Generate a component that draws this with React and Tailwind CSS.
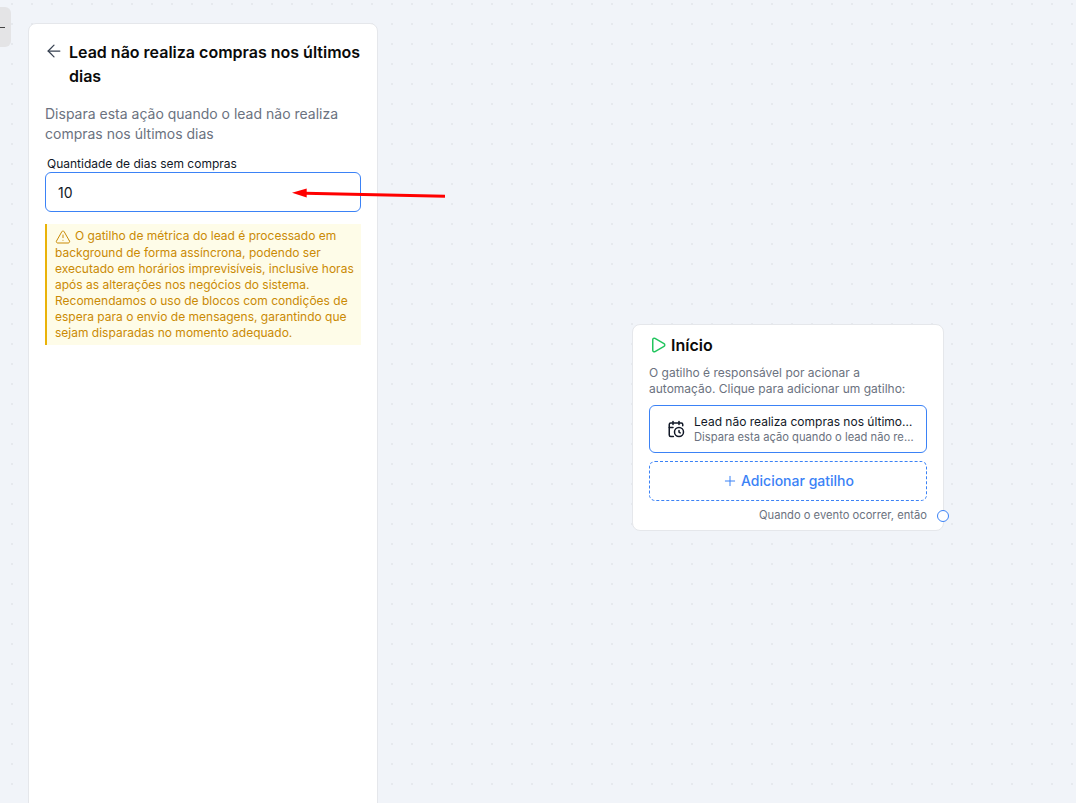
import React from "react";
import { ArrowLeft, CalendarClock, Play, Plus, TriangleAlert } from "lucide-react";

const App = () => {
  return (
    <div className="relative h-[803px] w-[1076px] overflow-hidden bg-[#f1f4f9] bg-[radial-gradient(circle,#e6e9ee_1px,transparent_1.5px)] bg-[length:20px_20px] bg-[position:2px_14px] font-['Inter',sans-serif]">
      {/* sidebar toggle */}
      <div className="absolute left-0 top-[7px] flex h-[40px] w-[11px] items-center rounded-r-md bg-[#e4e4e6]">
        <span className="h-px w-[5px] bg-[#444]"></span>
      </div>

      {/* left panel */}
      <div className="ml-[28px] mt-[23px] h-[820px] w-[350px] rounded-lg border border-[#e5e7eb] bg-white px-4 py-4">
        <div className="flex items-start gap-[5px]">
          <ArrowLeft size={20} strokeWidth={1.5} className="ml-[-1px] mt-[1px] shrink-0 text-[#374151]" />
          <h2 className="mr-[-4px] text-base font-semibold leading-6 text-[#0a0a0a]">
            Lead não realiza compras nos últimos dias
          </h2>
        </div>
        <p className="mt-[16px] text-sm leading-5 text-[#6b7280]">
          Dispara esta ação quando o lead não realiza compras nos últimos dias
        </p>
        <label className="mt-[12px] block pl-[2px] text-xs leading-4 text-[#111827]">
          Quantidade de dias sem compras
        </label>
        <input
          readOnly
          value="10"
          className="block h-[40px] w-full rounded-md border border-[#3b82f6] bg-white px-3 text-sm text-[#111827] outline-none"
        />
        <div className="mt-[12px] border-l-2 border-[#eab308] bg-[#fefce8] py-1 pl-2 pr-1 text-xs leading-4 text-[#ca8a04]">
          <TriangleAlert size={16} strokeWidth={1.5} className="mr-[4px] inline-block align-[-5px]" />
          O gatilho de métrica do lead é processado em background de forma assíncrona, podendo ser executado em horários imprevisíveis, inclusive horas após as alterações nos negócios do sistema. Recomendamos o uso de blocos com condições de espera para o envio de mensagens, garantindo que sejam disparadas no momento adequado.
        </div>
      </div>

      {/* red annotation arrow */}
      <svg className="absolute left-[285px] top-[180px]" width="170" height="25" viewBox="0 0 170 25">
        <path d="M160 16.3 L20 13.2" stroke="#ff0000" strokeWidth="3" fill="none" />
        <path d="M7 12.7 L21.7 8.6 L21.7 17.6 Z" fill="#ff0000" />
      </svg>

      {/* start node */}
      <div className="absolute left-[632px] top-[324px] h-[207px] w-[312px] rounded-lg border border-[#e5e7eb] bg-white px-4 pt-[8px]">
        <div className="flex items-center gap-[4px]">
          <Play size={18} strokeWidth={2} className="text-[#22c55e]" />
          <span className="text-base font-semibold leading-6 text-[#0a0a0a]">Início</span>
        </div>
        <p className="mt-[8px] text-xs leading-4 text-[#6b7280]">
          O gatilho é responsável por acionar a automação. Clique para adicionar um gatilho:
        </p>
        <div className="mt-2 flex h-[48px] items-center rounded-md border border-[#3b82f6] pl-[17px] pr-[12px]">
          <CalendarClock size={18} strokeWidth={2} className="shrink-0 text-[#111827]" />
          <div className="ml-[9px] min-w-0 flex-1">
            <div className="truncate text-xs leading-4 text-[#111827]">Lead não realiza compras nos últimos dias</div>
            <div className="truncate text-[11.2px] leading-[14px] text-[#6b7280]">Dispara esta ação quando o lead não realiza compras nos últimos dias</div>
          </div>
        </div>
        <div className="mt-2 flex h-[40px] items-center justify-center gap-[3px] rounded-md border border-dashed border-[#3b82f6] text-sm font-medium text-[#3b82f6]">
          <Plus size={16} strokeWidth={1.5} />
          Adicionar gatilho
        </div>
        <div className="mt-[6px] text-right text-[11.2px] leading-4 text-[#6b7280]">Quando o evento ocorrer, então</div>
        <span className="absolute bottom-[8px] right-[-6px] h-3 w-3 rounded-full border border-[#3b82f6] bg-white"></span>
      </div>
    </div>
  );
};

export default App;
